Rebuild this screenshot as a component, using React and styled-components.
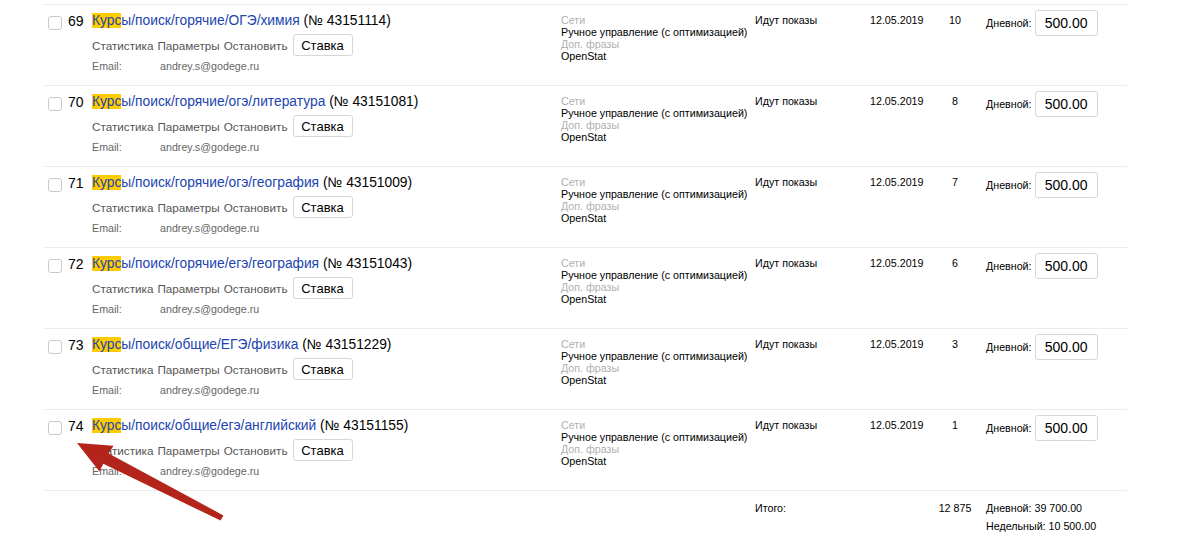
import React from 'react'
import styled, { createGlobalStyle } from 'styled-components'

const GlobalStyle = createGlobalStyle`
  html, body {
    margin: 0;
    padding: 0;
    background: #fff;
    font-family: "Liberation Sans", Arial, sans-serif;
    color: #000;
  }
`

const campaigns = [
  { n: 69, path: 'ы/поиск/горячие/ОГЭ/химия', id: '43151114', count: '10' },
  { n: 70, path: 'ы/поиск/горячие/огэ/литература', id: '43151081', count: '8' },
  { n: 71, path: 'ы/поиск/горячие/огэ/география', id: '43151009', count: '7' },
  { n: 72, path: 'ы/поиск/горячие/егэ/география', id: '43151043', count: '6' },
  { n: 73, path: 'ы/поиск/общие/ЕГЭ/физика', id: '43151229', count: '3' },
  { n: 74, path: 'ы/поиск/общие/егэ/английский', id: '43151155', count: '1' },
]

function Row({ item }) {
  return (
    <RowGrid>
      <MainCell>
        <Check />
        <Num>{item.n}</Num>
        <Info>
          <Title>
            <a href="#"><Mark>Курс</Mark>{item.path}</a> (№ {item.id})
          </Title>
          <Actions>
            <a href="#">Статистика</a>
            <a href="#">Параметры</a>
            <a href="#">Остановить</a>
            <BidButton>Ставка</BidButton>
          </Actions>
          <EmailLine>
            <span>Email:</span>
            <span>andrey.s@godege.ru</span>
          </EmailLine>
        </Info>
      </MainCell>
      <Strategy>
        <Label>Сети</Label>
        <div>Ручное управление (с оптимизацией)</div>
        <Label>Доп. фразы</Label>
        <div>OpenStat</div>
      </Strategy>
      <Status>Идут показы</Status>
      <DateCell>12.05.2019</DateCell>
      <CountCell>{item.count}</CountCell>
      <Budget>
        <span>Дневной:</span>
        <BudgetInput>500.00</BudgetInput>
      </Budget>
    </RowGrid>
  )
}

export default function App() {
  return (
    <Page>
      <GlobalStyle />
      <Table>
        {campaigns.map(c => <Row key={c.n} item={c} />)}
        <TotalRow>
          <div />
          <div />
          <TotalLabel>Итого:</TotalLabel>
          <div />
          <TotalCount>12 875</TotalCount>
          <Totals>
            <div>Дневной: 39 700.00</div>
            <div>Недельный: 10 500.00</div>
          </Totals>
        </TotalRow>
      </Table>
      <Arrow viewBox="0 0 1200 540" width="1200" height="540">
        <polygon
          fill="#b3241a"
          points="77,443 113.5,445.7 108.7,453.4 223.4,515.4 220.6,520.6 103.3,463.8 99.4,471.6"
        />
      </Arrow>
    </Page>
  )
}

const Page = styled.div`
  position: relative;
  width: 1200px;
  height: 540px;
  overflow: hidden;
  padding-top: 4px;
  box-sizing: border-box;
`

const Table = styled.div`
  margin-left: 44px;
  width: 1083px;
`

const RowGrid = styled.div`
  display: grid;
  grid-template-columns: 517px 194px 115px 60px 50px 1fr;
  height: 81px;
  box-sizing: border-box;
  border-top: 1px solid #ebebf0;
`

const MainCell = styled.div`
  display: flex;
  align-items: flex-start;
  padding-top: 7px;
`

const Check = styled.span`
  width: 12px;
  height: 12px;
  margin: 4px 0 0 4px;
  border: 1px solid #c9c9c9;
  border-radius: 3px;
  flex-shrink: 0;
`

const Num = styled.span`
  width: 24px;
  margin-left: 6px;
  font-size: 14px;
  line-height: 18px;
`

const Info = styled.div`
  display: flex;
  flex-direction: column;
`

const Title = styled.div`
  font-size: 13.8px;
  line-height: 18px;
  white-space: nowrap;
  a {
    color: #2244b0;
    text-decoration: none;
  }
`

const Mark = styled.span`
  background: #ffcc00;
`

const Actions = styled.div`
  display: flex;
  align-items: center;
  gap: 4px;
  margin-top: 4px;
  font-size: 11.7px;
  a {
    color: #555;
    text-decoration: none;
  }
`

const BidButton = styled.span`
  display: flex;
  align-items: center;
  justify-content: center;
  width: 58px;
  height: 20px;
  margin-left: 1px;
  border: 1px solid #d6d6d6;
  border-radius: 3px;
  font-size: 13px;
  color: #000;
`

const EmailLine = styled.div`
  display: flex;
  margin-top: 3px;
  font-size: 10.7px;
  line-height: 14px;
  color: #666;
  span:first-child {
    width: 68px;
  }
`

const Strategy = styled.div`
  padding-top: 9px;
  font-size: 10.7px;
  line-height: 12px;
  white-space: nowrap;
`

const Label = styled.div`
  color: #b0b0b0;
`

const Status = styled.div`
  padding-top: 8px;
  font-size: 10.7px;
  line-height: 14px;
`

const DateCell = styled(Status)``

const CountCell = styled(Status)`
  text-align: center;
`

const Budget = styled.div`
  display: flex;
  align-items: center;
  gap: 3px;
  padding: 5px 0 0 6px;
  align-self: start;
  font-size: 10.7px;
`

const BudgetInput = styled.span`
  display: flex;
  align-items: center;
  justify-content: center;
  width: 61px;
  height: 24px;
  border: 1px solid #d6d6d6;
  border-radius: 3px;
  font-size: 14px;
`

const TotalRow = styled(RowGrid)`
  height: 50px;
`

const TotalLabel = styled(Status)`
  padding-top: 10px;
`

const TotalCount = styled(CountCell)`
  padding-top: 10px;
`

const Totals = styled.div`
  padding: 8px 0 0 6px;
  font-size: 10.7px;
  line-height: 18px;
  white-space: nowrap;
`

const Arrow = styled.svg`
  position: absolute;
  left: 0;
  top: 0;
  pointer-events: none;
`
